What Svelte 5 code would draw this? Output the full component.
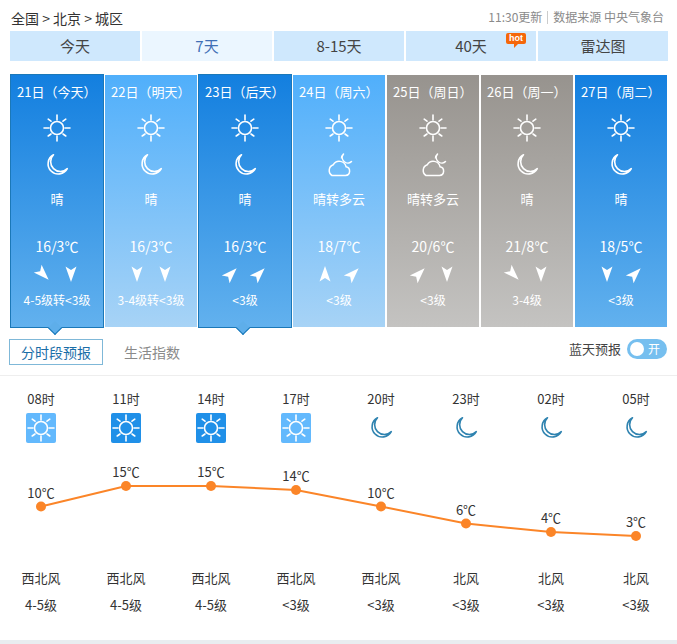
<script lang="ts">
  const tabs = ["今天", "7天", "8-15天", "40天", "雷达图"];

  const days = [
    { date: "21日（今天）", icon: "moon", text: "晴", temp: "16/3℃", wind: [135, 180], level: "4-5级转<3级", tone: "deep", active: true },
    { date: "22日（明天）", icon: "moon", text: "晴", temp: "16/3℃", wind: [180, 180], level: "3-4级转<3级", tone: "light" },
    { date: "23日（后天）", icon: "moon", text: "晴", temp: "16/3℃", wind: [45, 45], level: "<3级", tone: "deep", active: true },
    { date: "24日（周六）", icon: "cloud", text: "晴转多云", temp: "18/7℃", wind: [0, 45], level: "<3级", tone: "light" },
    { date: "25日（周日）", icon: "cloud", text: "晴转多云", temp: "20/6℃", wind: [45, 180], level: "<3级", tone: "gray" },
    { date: "26日（周一）", icon: "moon", text: "晴", temp: "21/8℃", wind: [135, 180], level: "3-4级", tone: "gray" },
    { date: "27日（周二）", icon: "moon", text: "晴", temp: "18/5℃", wind: [180, 45], level: "<3级", tone: "deep" },
  ];

  const hours = [
    { time: "08时", icon: "light", temp: 10, y: 507.5, dir: "西北风", level: "4-5级" },
    { time: "11时", icon: "deep", temp: 15, y: 487, dir: "西北风", level: "4-5级" },
    { time: "14时", icon: "deep", temp: 15, y: 487, dir: "西北风", level: "4-5级" },
    { time: "17时", icon: "light", temp: 14, y: 491, dir: "西北风", level: "<3级" },
    { time: "20时", icon: "moon", temp: 10, y: 507.5, dir: "西北风", level: "<3级" },
    { time: "23时", icon: "moon", temp: 6, y: 524.5, dir: "北风", level: "<3级" },
    { time: "02时", icon: "moon", temp: 4, y: 533, dir: "北风", level: "<3级" },
    { time: "05时", icon: "moon", temp: 3, y: 537, dir: "北风", level: "<3级" },
  ];

  const pointX = (i: number) => 41 + i * 85;
  const line = hours.map((h, i) => `${pointX(i)},${h.y}`).join(" ");
</script>

{#snippet sun()}
  <svg class="icon" viewBox="0 0 30 30" fill="none" stroke="currentColor" stroke-width="1.6" stroke-linecap="round">
    <circle cx="15" cy="15" r="6.5" />
    <path d="M15 2v5M15 23v5M2 15h5M23 15h5M6.2 6.2l2.8 2M21 21l2.8 2M23.8 6.2l-2.8 2M9 21l-2.8 2" />
  </svg>
{/snippet}

{#snippet moon()}
  <svg class="icon" viewBox="0 0 30 30" fill="none" stroke="currentColor" stroke-width="1.6" stroke-linejoin="round">
    <path d="M11.5 4.8A10.2 10.2 0 1 0 25.3 18.6A9.6 9.6 0 0 1 11.5 4.8Z" />
  </svg>
{/snippet}

{#snippet cloud()}
  <svg class="icon" viewBox="0 0 30 30" fill="none" stroke="currentColor" stroke-width="1.5" stroke-linejoin="round">
    <path d="M8 25.5h13.5a4.4 4.4 0 0 0 .6-8.7a7 7 0 0 0-12.9-2a6 6 0 0 0-1.2 10.7Z" />
    <path d="M17.5 8.5a5.5 5.5 0 0 1 2-4.5a5.5 5.5 0 0 0 8 7.5a5 5 0 0 1-3 1.5" />
  </svg>
{/snippet}

{#snippet arrow(deg: number)}
  <svg class="arrow" viewBox="-10 -10 20 20" fill="#fff">
    <path d="M0 -8L5.5 7.5L0 4L-5.5 7.5Z" transform="rotate({deg})" />
  </svg>
{/snippet}

<div class="page">
  <header class="crumbs">
    <span class="path">全国 &gt; 北京 &gt; 城区</span>
    <span class="source">11:30更新<i></i>数据来源 中央气象台</span>
  </header>

  <nav class="tabs">
    {#each tabs as tab, i}
      <a class="tab" class:current={i === 1}>
        {tab}
        {#if i === 3}<em class="hot">hot</em>{/if}
      </a>
    {/each}
  </nav>

  <ul class="days">
    {#each days as d}
      <li class="day {d.tone}" class:active={d.active}>
        <div class="date">{d.date}</div>
        <div class="sky first">{@render sun()}</div>
        <div class="sky second">
          {#if d.icon === "cloud"}{@render cloud()}{:else}{@render moon()}{/if}
        </div>
        <div class="desc">{d.text}</div>
        <div class="temp">{d.temp}</div>
        <div class="winds">
          {#each d.wind as w}{@render arrow(w)}{/each}
        </div>
        <div class="level">{d.level}</div>
      </li>
    {/each}
  </ul>

  <div class="subbar">
    <div class="subtabs">
      <span class="subtab on">分时段预报</span>
      <span class="subtab">生活指数</span>
    </div>
    <div class="blue">
      <span>蓝天预报</span>
      <span class="toggle"><b></b>开</span>
    </div>
  </div>

  <section class="hourly">
    <div class="cols times">
      {#each hours as h}<div>{h.time}</div>{/each}
    </div>
    <div class="cols glyphs">
      {#each hours as h}
        <div>
          {#if h.icon === "moon"}
            <span class="hicon night">{@render moon()}</span>
          {:else}
            <span class="hicon {h.icon}">{@render sun()}</span>
          {/if}
        </div>
      {/each}
    </div>

    <svg class="chart" viewBox="0 450 677 110">
      <polyline points={line} fill="none" stroke="#fb8528" stroke-width="2" />
      {#each hours as h, i}
        <circle cx={pointX(i)} cy={h.y} r="5" fill="#fb8528" />
        <text x={pointX(i)} y={h.y - 9}>{h.temp}℃</text>
      {/each}
    </svg>

    <div class="cols dirs">
      {#each hours as h}<div>{h.dir}</div>{/each}
    </div>
    <div class="cols levels">
      {#each hours as h}<div>{h.level}</div>{/each}
    </div>
  </section>

  <div class="foot"></div>
</div>

<style>
  :global(body) {
    margin: 0;
    background: #fff;
  }

  .page {
    width: 677px;
    height: 644px;
    overflow: hidden;
    font-family: "Noto Sans CJK SC", "Open Sans", sans-serif;
    color: #333;
    display: flex;
    flex-direction: column;
  }

  .crumbs {
    height: 31px;
    box-sizing: border-box;
    padding: 8px 13px 0 11px;
    display: flex;
    justify-content: space-between;
    line-height: 20px;
  }

  .path {
    font-size: 14px;
    color: #333;
  }

  .source {
    font-size: 12px;
    color: #8a8a8a;
    line-height: 17px;
  }

  .source i {
    display: inline-block;
    width: 1px;
    height: 13px;
    margin: 0 5px;
    background: #ccc;
    vertical-align: -2px;
  }

  .tabs {
    display: flex;
    gap: 2px;
    padding-left: 10px;
  }

  .tab {
    position: relative;
    width: 130px;
    height: 30px;
    line-height: 30px;
    text-align: center;
    font-size: 15px;
    background: #cfe8fd;
    color: #444;
  }

  .tab.current {
    background: #ebf6ff;
    color: #3f6fb5;
  }

  .hot {
    position: absolute;
    top: 2px;
    right: 10px;
    width: 20px;
    height: 11px;
    border-radius: 2px;
    background: #f5670a;
    color: #fff;
    font-size: 9px;
    font-style: normal;
    font-weight: 700;
    line-height: 11px;
    font-family: "Liberation Sans", sans-serif;
  }

  .hot::after {
    content: "";
    position: absolute;
    left: 8px;
    top: 11px;
    border: 2px solid transparent;
    border-top-color: #f5670a;
    border-left-color: #f5670a;
  }

  .days {
    list-style: none;
    margin: 13px 0 0 10px;
    padding: 0;
    display: flex;
  }

  .day {
    position: relative;
    box-sizing: border-box;
    width: 94px;
    height: 254px;
    border: 1px solid transparent;
    background-clip: padding-box;
    color: #fff;
    text-align: center;
  }

  .day.deep {
    background-image: linear-gradient(#137fdf, #62b1ee);
  }

  .day.light {
    background-image: linear-gradient(#50affb, #a7d3f6);
  }

  .day.gray {
    background-image: linear-gradient(#97938e, #c4c3c1);
  }

  .day.active {
    border-color: #1b78b8;
  }

  .day.active::after {
    content: "";
    position: absolute;
    left: 39px;
    bottom: -6px;
    width: 9px;
    height: 9px;
    background: #5eaeea;
    border: solid #1b78b8;
    border-width: 0 1px 1px 0;
    transform: rotate(45deg);
  }

  .date {
    margin-top: 6px;
    padding-left: 6px;
    text-align: left;
    font-size: 13px;
    line-height: 22px;
    white-space: nowrap;
  }

  .sky {
    height: 30px;
  }

  .sky.first {
    margin-top: 10px;
  }

  .sky.second {
    margin-top: 7px;
  }

  .icon {
    display: block;
    width: 30px;
    height: 30px;
    margin: 0 auto;
  }

  .desc,
  .temp,
  .level {
    line-height: 20px;
    white-space: nowrap;
  }

  .desc {
    margin-top: 9px;
    font-size: 13px;
  }

  .temp {
    margin-top: 27px;
    font-size: 14px;
  }

  .winds {
    margin-top: 8px;
    height: 20px;
    display: flex;
    justify-content: center;
    gap: 8px;
  }

  .arrow {
    width: 20px;
    height: 20px;
  }

  .level {
    margin-top: 6px;
    font-size: 12px;
  }

  .subbar {
    height: 48px;
    box-sizing: border-box;
    padding: 11px 10px 0 9px;
    border-bottom: 1px solid #eee;
    display: flex;
    justify-content: space-between;
    align-items: flex-start;
  }

  .subtabs {
    display: flex;
    align-items: center;
    gap: 21px;
  }

  .subtab {
    font-size: 14px;
    line-height: 24px;
    color: #8a8a8a;
  }

  .subtab.on {
    width: 92px;
    text-align: center;
    border: 1px solid #7fb8d8;
    color: #1a6ea8;
  }

  .blue {
    display: flex;
    align-items: center;
    gap: 6px;
    font-size: 13px;
    line-height: 20px;
    color: #444;
  }

  .toggle {
    position: relative;
    box-sizing: border-box;
    width: 40px;
    height: 20px;
    padding-left: 21px;
    border-radius: 10px;
    background: #76bfef;
    color: #fff;
    font-size: 12px;
  }

  .toggle b {
    position: absolute;
    left: 3px;
    top: 3px;
    width: 14px;
    height: 14px;
    border-radius: 50%;
    background: #fff;
  }

  .hourly {
    flex: 1;
  }

  .cols {
    display: grid;
    grid-template-columns: repeat(8, 82px);
    gap: 3px;
    text-align: center;
    font-size: 13px;
    color: #333;
    white-space: nowrap;
  }

  .times {
    margin-top: 13px;
    line-height: 20px;
  }

  .glyphs {
    margin-top: 4px;
    height: 30px;
  }

  .hicon {
    display: block;
    width: 30px;
    height: 30px;
    margin: 0 auto;
    border-radius: 2px;
    color: #fff;
  }

  .hicon.light {
    background: #63b9fd;
  }

  .hicon.deep {
    background: #2090e8;
  }

  .hicon.night {
    color: #2f83b0;
  }

  .chart {
    display: block;
    margin-top: 6px;
    width: 677px;
    height: 110px;
  }

  .chart text {
    font-size: 13px;
    fill: #333;
    text-anchor: middle;
  }

  .dirs {
    margin-top: 9px;
    line-height: 20px;
  }

  .levels {
    margin-top: 7px;
    line-height: 20px;
  }

  .foot {
    height: 4px;
    background: #e9edf0;
  }
</style>
